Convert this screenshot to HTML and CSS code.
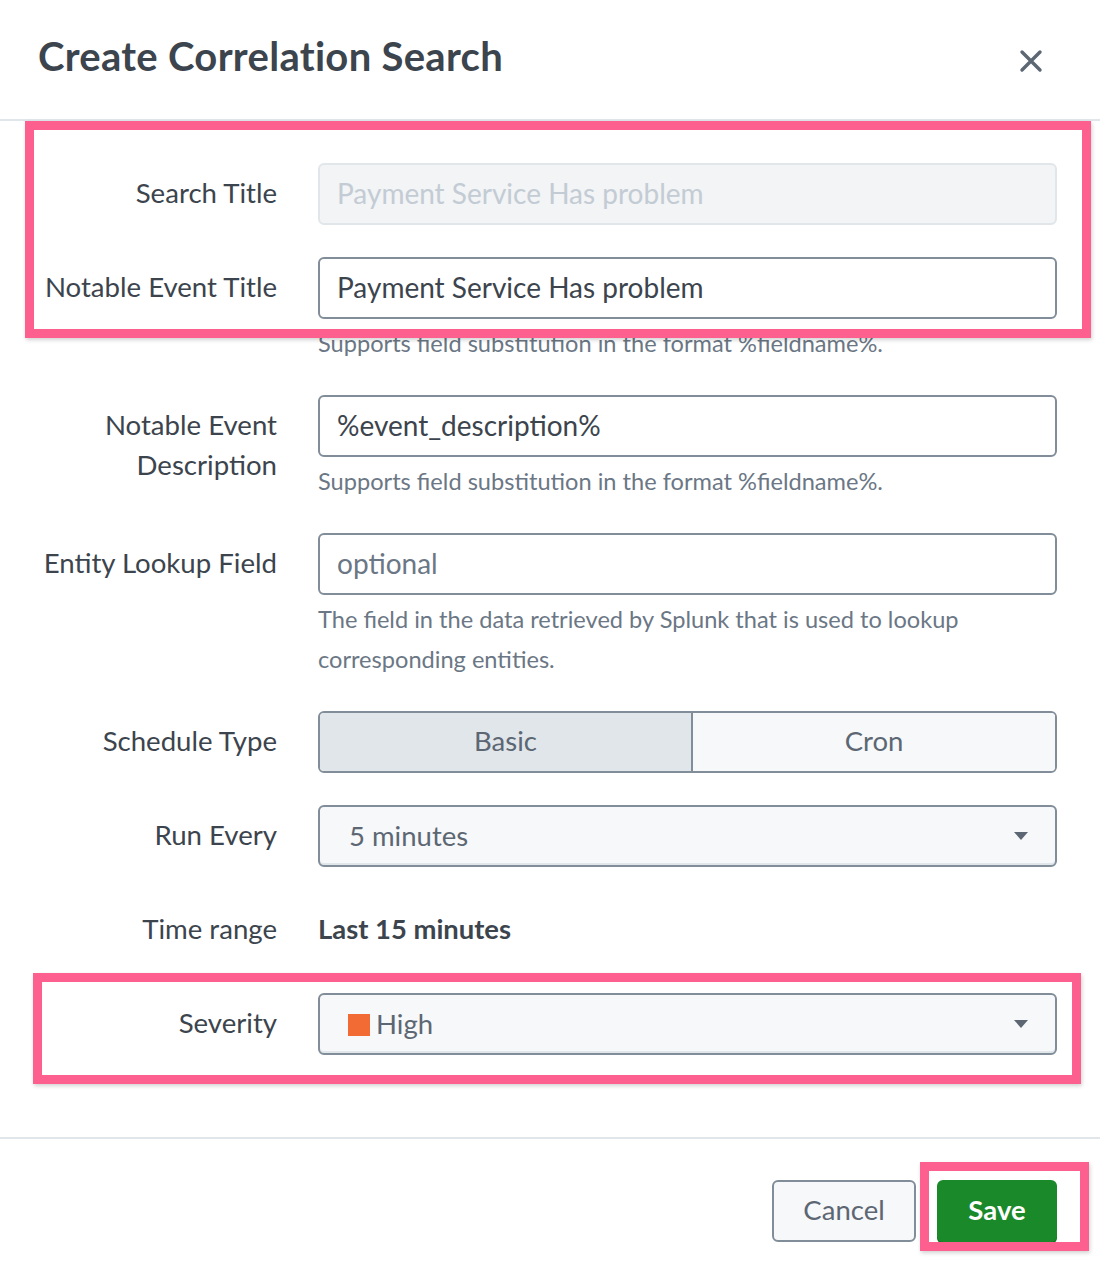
FILE: index.html
```html
<!DOCTYPE html>
<html>
<head>
<meta charset="utf-8">
<link rel="stylesheet" href="styles.css">
</head>
<body>
<div class="modal">
  <header class="modal-header">
    <h1 class="title">Create Correlation Search</h1>
    <button class="close" aria-label="Close">
      <svg width="24" height="24" viewBox="0 0 24 24"><path d="M3 3 L21 21 M21 3 L3 21" stroke="#5c6773" stroke-width="3.4" stroke-linecap="round" fill="none"/></svg>
    </button>
  </header>

  <div class="modal-body">
    <div class="row">
      <div class="label">Search Title</div>
      <div class="control">
        <div class="input disabled">Payment Service Has problem</div>
      </div>
    </div>
    <div class="row">
      <div class="label">Notable Event Title</div>
      <div class="control">
        <div class="input">Payment Service Has problem</div>
        <div class="help">Supports field substitution in the format %fieldname%.</div>
      </div>
    </div>
    <div class="row">
      <div class="label">Notable Event<br>Description</div>
      <div class="control">
        <div class="input">%event_description%</div>
        <div class="help">Supports field substitution in the format %fieldname%.</div>
      </div>
    </div>
    <div class="row">
      <div class="label">Entity Lookup Field</div>
      <div class="control">
        <div class="input placeholder">optional</div>
        <div class="help">The field in the data retrieved by Splunk that is used to lookup<br>corresponding entities.</div>
      </div>
    </div>
    <div class="row">
      <div class="label">Schedule Type</div>
      <div class="control">
        <div class="btn-group">
          <div class="seg selected">Basic</div>
          <div class="seg">Cron</div>
        </div>
      </div>
    </div>
    <div class="row">
      <div class="label">Run Every</div>
      <div class="control">
        <div class="select"><span class="select-text">5 minutes</span><span class="caret"></span></div>
      </div>
    </div>
    <div class="row">
      <div class="label">Time range</div>
      <div class="control">
        <div class="static">Last 15 minutes</div>
      </div>
    </div>
    <div class="row">
      <div class="label">Severity</div>
      <div class="control">
        <div class="select"><span class="select-text sev"><span class="swatch"></span>High</span><span class="caret"></span></div>
      </div>
    </div>
  </div>

  <footer class="modal-footer">
    <button class="btn cancel">Cancel</button>
    <button class="btn save">Save</button>
  </footer>

  <div class="highlight hl-1"></div>
  <div class="highlight hl-2"></div>
  <div class="highlight hl-3"></div>
</div>
</body>
</html>
```

FILE: styles.css
```css
* { box-sizing: border-box; }
html, body { margin: 0; padding: 0; background: #fff; }
body {
  font-family: Lato, "Open Sans", "Liberation Sans", sans-serif;
  color: #3c444d;
  width: 1100px;
  height: 1278px;
  overflow: hidden;
}
.modal { position: relative; width: 1100px; height: 1278px; background: #fff; }

.modal-header {
  height: 121px;
  border-bottom: 2px solid #e1e6eb;
  display: flex;
  align-items: center;
  justify-content: space-between;
  padding: 0 57px 8px 38px;
}
.title {
  margin: 0;
  font-size: 40px;
  font-weight: 700;
  color: #3c444d;
  letter-spacing: 0.3px;
}
.close {
  border: 0; background: none; padding: 0; margin-top: 10px;
  width: 24px; height: 24px; display: flex;
}

.modal-body { padding: 42px 43px 82px 0; }
.row { display: flex; align-items: flex-start; margin-bottom: 32px; }
.row:last-child { margin-bottom: 0; }
.label {
  width: 277px;
  flex: none;
  text-align: right;
  font-size: 27.6px;
  line-height: 40px;
  padding-top: 10px;
  color: #3c444d;
}
.control { margin-left: 41px; flex: 1; }
.input {
  height: 62px;
  border: 2px solid #818d99;
  border-radius: 6px;
  background: #fff;
  font-size: 28px;
  line-height: 56px;
  padding: 0 17px;
  color: #3c444d;
}
.input.disabled { background: #f2f4f5; border-color: #e1e6eb; color: #c3cbd4; }
.input.placeholder { color: #6b7785; }
.help {
  margin-top: 4px;
  font-size: 23.6px;
  line-height: 40px;
  color: #6b7785;
}
.btn-group {
  display: flex;
  height: 62px;
  border: 2px solid #818d99;
  border-radius: 6px;
  overflow: hidden;
}
.seg {
  flex: 1;
  text-align: center;
  font-size: 27.5px;
  line-height: 56px;
  color: #5c6773;
  background: #f7f8fa;
}
.seg.selected { flex: 0 0 373px; background: #e1e6eb; border-right: 2px solid #818d99; }
.select {
  height: 62px;
  border: 2px solid #818d99;
  border-radius: 6px;
  background: #f7f8fa;
  display: flex;
  align-items: center;
  justify-content: space-between;
  padding: 0 27px 0 29px;
  box-shadow: inset 0 -2px 0 #e1e6eb;
}
.select-text { font-size: 27.5px; color: #5c6773; line-height: 56px; display: flex; align-items: center; }
.sev { margin-left: -1px; color: #5c6773; }
.swatch { width: 22px; height: 22px; background: #f26b35; margin-right: 6px; margin-top: 2px; }
.caret {
  width: 0; height: 0;
  border-left: 7px solid transparent;
  border-right: 7px solid transparent;
  border-top: 8px solid #5c6773;
}
.static {
  height: 62px;
  line-height: 60px;
  font-size: 27.4px;
  font-weight: 700;
  color: #3c444d;
}

.modal-footer {
  border-top: 2px solid #e1e6eb;
  display: flex;
  justify-content: flex-end;
  gap: 21px;
  padding: 41px 43px 0 0;
}
.btn {
  height: 62px;
  border-radius: 6px;
  font-family: inherit;
  font-size: 27.5px;
  padding: 0 0 4px;
}
.cancel { width: 144px; background: #f7f8fa; border: 2px solid #818d99; color: #5c6773; }
.save { width: 120px; background: #1a8929; border: 0; color: #fff; font-weight: 700; box-shadow: 0 2px 0 #166e22; }

.highlight {
  position: absolute;
  border: 9px solid #fd5f8f;
  box-shadow: 1px 2px 4px rgba(0,0,0,0.18);
  pointer-events: none;
}
.hl-1 { left: 25px; top: 121px; width: 1066px; height: 217px; }
.hl-2 { left: 33px; top: 973px; width: 1048px; height: 111px; }
.hl-3 { left: 920px; top: 1162px; width: 169px; height: 89px; }
```
